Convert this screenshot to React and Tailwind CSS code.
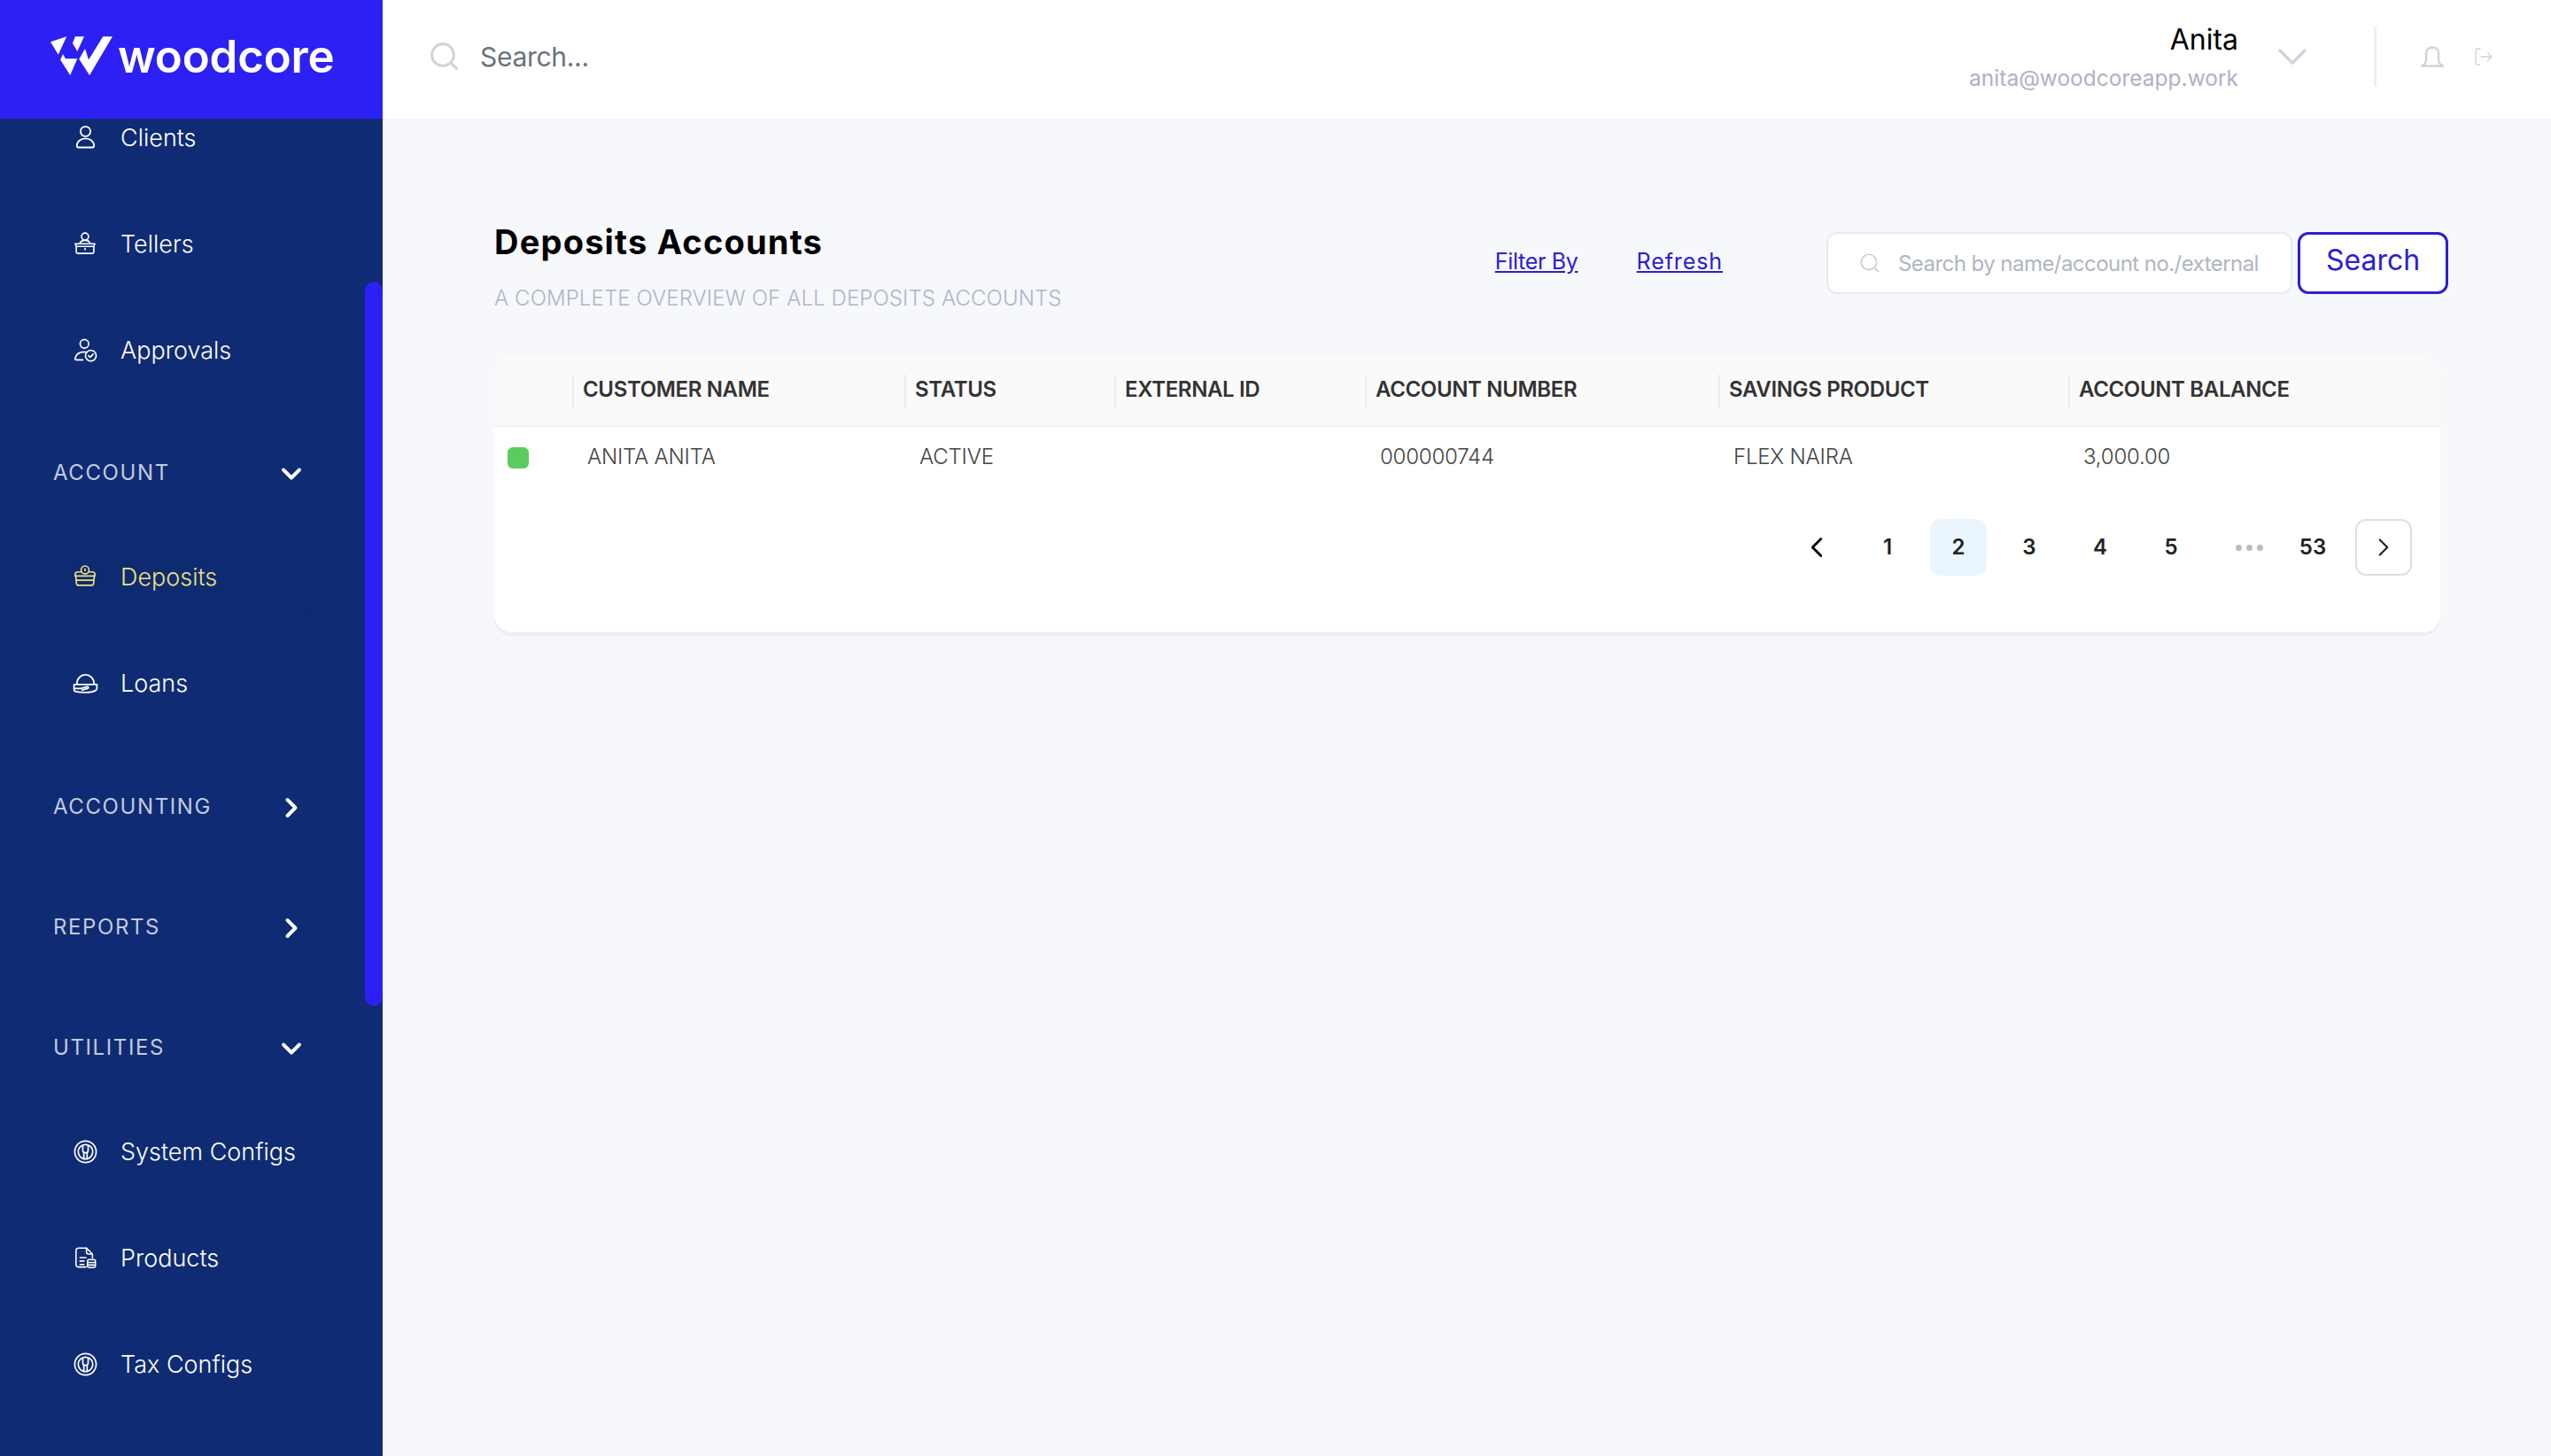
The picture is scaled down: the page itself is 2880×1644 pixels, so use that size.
import { ChevronDown, ChevronRight, ChevronLeft, Search } from "lucide-react";

const iconProps = {
  fill: "none",
  stroke: "currentColor",
  strokeWidth: 1.4,
  strokeLinecap: "round",
  strokeLinejoin: "round",
  viewBox: "0 0 24 24",
};

function ClientIcon() {
  return (
    <svg {...iconProps} className="w-[31px] h-[31px]">
      <circle cx="12" cy="6.500" r="4.300" />
      <path d="M4.500 19c0-3.600 3.200-6.300 7.500-6.300s7.500 2.700 7.500 6.300c0 .9-.6 1.500-1.500 1.500H6c-.9 0-1.500-.6-1.500-1.500z" />
    </svg>
  );
}

function TellerIcon() {
  return (
    <svg {...iconProps} className="w-[28px] h-[28px]">
      <circle cx="12" cy="5.200" r="3.400" />
      <path d="M7 12.200c.5-2 2.600-3.300 5-3.300s4.500 1.300 5 3.300" />
      <path d="M2.500 12.200h19l-1 2.300v5.600c0 .9-.5 1.400-1.400 1.400H4.900c-.9 0-1.400-.5-1.400-1.400v-5.600z" />
      <path d="M3.500 14.800h17M12 16.800v1.200" />
    </svg>
  );
}

function ApprovalIcon() {
  return (
    <svg {...iconProps} className="w-[29px] h-[29px]">
      <circle cx="11" cy="6" r="4" />
      <path d="M9.500 21H3.500c-.8 0-1.300-.6-1.200-1.300.4-3.500 3.700-6.200 8.200-6.200 1 0 2 .1 2.800.4" />
      <circle cx="17" cy="17" r="5" />
      <path d="M14.800 17l1.600 1.500 2.800-2.900" />
    </svg>
  );
}

function DepositIcon() {
  return (
    <svg {...iconProps} className="w-[28px] h-[28px]">
      <circle cx="12" cy="5.500" r="3.800" />
      <path d="M12 4.500v2" />
      <path d="M8 7.500H5c-1.500 0-2.500 1-2.500 2.500v1.500h19V10c0-1.500-1-2.500-2.500-2.500h-3" />
      <path d="M3 11.500l.7 7c.1 1.300 1 2 2.300 2h12c1.300 0 2.200-.7 2.300-2l.7-7" />
      <path d="M3.500 15.500h17" />
    </svg>
  );
}

function LoanIcon() {
  return (
    <svg {...iconProps} className="w-[31px] h-[31px]">
      <path d="M4.500 12.500C4.500 8 7.800 4.500 12 4.500s7.500 3.500 7.500 8" />
      <path d="M2 13h20v3.500c0 1-.5 1.500-1.500 2-2 1-5 1.500-8.500 1.500-2.500 0-6-.2-8.500-.8C2.500 19 2 18.500 2 17.500z" />
      <path d="M2.500 16.500H8l5.500-1.500c1-.2 1.500 1 .5 1.500L9 18" />
    </svg>
  );
}

function ConfigIcon() {
  return (
    <svg {...iconProps} className="w-[29px] h-[29px]">
      <circle cx="12" cy="12" r="10" />
      <circle cx="12" cy="12" r="6.800" />
      <path d="M9.500 6.500v4c0 1.500 1 2.500 2.500 2.500s2.500-1 2.500-2.500v-4" />
      <path d="M10.500 13v5.800M13.500 13v5.800" />
    </svg>
  );
}

function ProductIcon() {
  return (
    <svg {...iconProps} className="w-[27px] h-[27px]">
      <path d="M12.500 21H5c-1.500 0-2.500-1-2.500-2.500v-14C2.500 3 3.500 2 5 2h8l6 6v4" />
      <path d="M13 2v4c0 1.300.8 2 2 2h4" />
      <path d="M6.500 11.500h6M6.500 15h4M6.500 18.500h4" />
      <rect x="14" y="13.500" width="8" height="8" rx="1.500" />
      <path d="M14.500 16.500h7M14.500 19h7" />
    </svg>
  );
}

function BellIcon() {
  return (
    <svg fill="none" stroke="currentColor" strokeWidth="2.400" strokeLinecap="round" strokeLinejoin="round" viewBox="0 0 28 24" className="w-[28px] h-[24px]">
      <path d="M2 22.500h24" />
      <path d="M3.500 22c2-1.500 3.500-3.500 3.500-7V8.500C7 4.300 9.800 1.500 14 1.500s7 2.800 7 7V15c0 3.500 1.500 5.500 3.500 7" />
    </svg>
  );
}

function LogoutIcon() {
  return (
    <svg fill="none" stroke="currentColor" strokeWidth="1.300" strokeLinecap="round" strokeLinejoin="round" viewBox="0 0 22 22" className="w-[22px] h-[22px]">
      <path d="M7 2H3.500C2.600 2 2 2.600 2 3.500v15c0 .9.600 1.500 1.500 1.500H7" />
      <path d="M8 11h12M15.500 6.500L20 11l-4.500 4.500" />
    </svg>
  );
}

function NavItem({ icon, label, active }) {
  return (
    <div className={`h-[120px] shrink-0 flex items-center ${active ? "text-[#ebe17f]" : "text-white"}`}>
      <div className={`mx-[60px] w-[293px] h-[90px] flex items-center rounded-[8px] ${active ? "bg-[#0e2a70]" : ""}`}>
        <div className="w-[76px] pr-[4px] flex justify-center">{icon}</div>
        <span className="text-[27px] leading-none font-light whitespace-nowrap">{label}</span>
      </div>
    </div>
  );
}

function NavGroup({ label, open, className }) {
  return (
    <div className={`shrink-0 flex items-center pl-[60px] ${className}`}>
      <span className="w-[251px] pt-[2px] text-[24px] leading-none tracking-[1.6px] text-[#c3cadf] whitespace-nowrap">{label}</span>
      {open ? (
        <ChevronDown size={36} strokeWidth={2.600} className="text-white mt-[4px]" />
      ) : (
        <ChevronRight size={36} strokeWidth={2.600} className="text-white mt-[4px]" />
      )}
    </div>
  );
}

function Sidebar() {
  return (
    <aside className="relative w-[432px] shrink-0 h-full flex flex-col bg-[#0f2b73] overflow-hidden">
      <div className="relative z-10 h-[134px] shrink-0 bg-[#2c20f5] flex items-center pl-[57px] pb-[8px]">
        <svg viewBox="172 127 208 130" className="w-[70px] h-[44px] fill-white">
          <polygon points="172,145 226,127 198,188" />
          <polygon points="205,205 238,257 262,202 222,202 214,186" />
          <polygon points="255,127 285,127 262,177 246,150" />
          <polygon points="268,203 303,257 380,127 348,127 300,205 288,168" />
        </svg>
        <span className="ml-[6px] text-[51px] leading-none font-semibold text-white tracking-[-0.2px]">woodcore</span>
      </div>
      <div className="flex-1 flex flex-col -mt-[39px]">
        <NavItem icon={<ClientIcon />} label="Clients" />
        <NavItem icon={<TellerIcon />} label="Tellers" />
        <NavItem icon={<ApprovalIcon />} label="Approvals" />
        <NavGroup label="ACCOUNT" open className="h-[116px] mt-[20px]" />
        <NavItem icon={<DepositIcon />} label="Deposits" active />
        <NavItem icon={<LoanIcon />} label="Loans" />
        <NavGroup label="ACCOUNTING" className="h-[136px] mt-[11px]" />
        <NavGroup label="REPORTS" className="h-[136px]" />
        <NavGroup label="UTILITIES" open className="h-[116px] mt-[10px]" />
        <NavItem icon={<ConfigIcon />} label="System Configs" />
        <NavItem icon={<ProductIcon />} label="Products" />
        <NavItem icon={<ConfigIcon />} label="Tax Configs" />
      </div>
      <div className="absolute right-0 top-[318px] w-[20px] h-[818px] rounded-full bg-[#2c20f5]" />
    </aside>
  );
}

function Topbar() {
  return (
    <header className="h-[134px] shrink-0 bg-white flex items-center pl-[51px] pr-[65px] pb-[7px]">
      <Search size={37} strokeWidth={2} className="text-[#d0d3da] mr-[22px]" />
      <input
        placeholder="Search..."
        className="flex-1 text-[30px] leading-none tracking-[-0.3px] outline-none placeholder:text-[#6b7280]"
      />
      <div className="flex flex-col items-end mt-[5px]">
        <span className="text-[32px] leading-[40px] text-black">Anita</span>
        <span className="mt-[3px] text-[24.500px] leading-[40px] text-[#aeb2c4]">anita@woodcoreapp.work</span>
      </div>
      <ChevronDown size={56} strokeWidth={1.500} className="text-[#d0d3da] ml-[33px]" />
      <div className="ml-[64px] w-[3px] h-[68px] bg-[#eef0f5]" />
      <div className="ml-[49px] text-[#d0d3da]">
        <BellIcon />
      </div>
      <div className="ml-[33px] text-[#d0d3da]">
        <LogoutIcon />
      </div>
    </header>
  );
}

const columns = ["CUSTOMER NAME", "STATUS", "EXTERNAL ID", "ACCOUNT NUMBER", "SAVINGS PRODUCT", "ACCOUNT BALANCE"];
const row = ["ANITA ANITA", "ACTIVE", "", "000000744", "FLEX NAIRA", "3,000.00"];
const gridCols = "grid grid-cols-[88px_375px_237px_283px_399px_395px_1fr]";

function AccountsTable() {
  return (
    <div>
      <div className={`${gridCols} h-[79px] items-center bg-[#fafafa] border-b-2 border-[#f0f0f2]`}>
        <div />
        {columns.map((col) => (
          <div key={col} className="h-[38px] flex items-center border-l-2 border-[#ececec] pl-[10px] pb-[4px] text-[24px] leading-none font-semibold text-[#333333] tracking-[-0.35px] whitespace-nowrap">
            {col}
          </div>
        ))}
      </div>
      <div className={`${gridCols} h-[68px] items-center`}>
        <div className="pl-[15px] pt-[2px]">
          <div className="w-[24px] h-[24px] rounded-[6px] bg-[#5ccb5f]" />
        </div>
        {row.map((cell, i) => (
          <div key={i} className="pl-[17px] text-[24px] leading-none font-light text-[#444444] tracking-[-0.2px] whitespace-nowrap">
            {cell}
          </div>
        ))}
      </div>
    </div>
  );
}

function Pagination() {
  const pageClass = "w-[64px] h-[64px] flex items-center justify-center text-[24px] font-semibold text-[#222222] rounded-[12px]";
  return (
    <div className="flex items-center justify-end gap-[16px] mt-[36px] pr-[32px] pb-[64px]">
      <div className="w-[64px] h-[64px] flex items-center justify-center">
        <ChevronLeft size={38} strokeWidth={1.800} className="text-black" />
      </div>
      <div className={pageClass}>1</div>
      <div className={`${pageClass} bg-[#ebf5fe]`}>2</div>
      <div className={pageClass}>3</div>
      <div className={pageClass}>4</div>
      <div className={pageClass}>5</div>
      <div className="w-[64px] h-[64px] flex items-center justify-center gap-[5px] pl-[16px]">
        <span className="w-[7px] h-[7px] rounded-full bg-[#bdbdbd]" />
        <span className="w-[7px] h-[7px] rounded-full bg-[#bdbdbd]" />
        <span className="w-[7px] h-[7px] rounded-full bg-[#bdbdbd]" />
      </div>
      <div className={pageClass}>53</div>
      <div className="w-[64px] h-[64px] flex items-center justify-center rounded-[12px] border-2 border-[#e0e0e0]">
        <ChevronRight size={34} strokeWidth={1.500} className="text-[#222222]" />
      </div>
    </div>
  );
}

export default function App() {
  return (
    <div className="h-screen flex overflow-hidden bg-[#f7f8fc] font-['Inter',sans-serif]">
      <Sidebar />
      <div className="flex-1 flex flex-col min-w-0">
        <Topbar />
        <main className="flex-1 pt-[116px] pl-[126px] pr-[125px]">
          <div className="flex items-start">
            <div>
              <h1 className="text-[38px] leading-[46px] font-bold text-black tracking-[1.2px]">Deposits Accounts</h1>
              <p className="mt-[26px] text-[24px] leading-[30px] font-light text-[#b0b5c5] tracking-[0.1px]">
                A COMPLETE OVERVIEW OF ALL DEPOSITS ACCOUNTS
              </p>
            </div>
            <div className="ml-auto -mr-[9px] mt-[12px] flex items-center">
              <a className="text-[25px] leading-none underline text-[#2b20d0] tracking-[-0.3px] mb-[4px]">Filter By</a>
              <a className="ml-[66px] text-[25px] leading-none underline text-[#2b20d0] tracking-[0.9px] mb-[4px]">Refresh</a>
              <div className="ml-[117px] w-[526px] h-[70px] flex items-center rounded-[12px] border-2 border-[#e8eaf2] bg-white pl-[34px]">
                <Search size={26} strokeWidth={1.600} className="text-[#c9ccd6] shrink-0" />
                <input
                  placeholder="Search by name/account no./external"
                  className="ml-[19px] flex-1 min-w-0 text-[24px] leading-none tracking-[-0.55px] outline-none placeholder:text-[#b0b5c5]"
                />
              </div>
              <button className="ml-[6px] w-[170px] h-[70px] rounded-[12px] border-[3px] border-[#2b20d0] bg-white text-[32px] leading-none text-[#2b20d0] pb-[6px]">
                Search
              </button>
            </div>
          </div>
          <section className="mt-[51px] rounded-[20px] overflow-hidden bg-white shadow-[0_4px_0_#eceef6]">
            <AccountsTable />
            <Pagination />
          </section>
        </main>
      </div>
    </div>
  );
}
